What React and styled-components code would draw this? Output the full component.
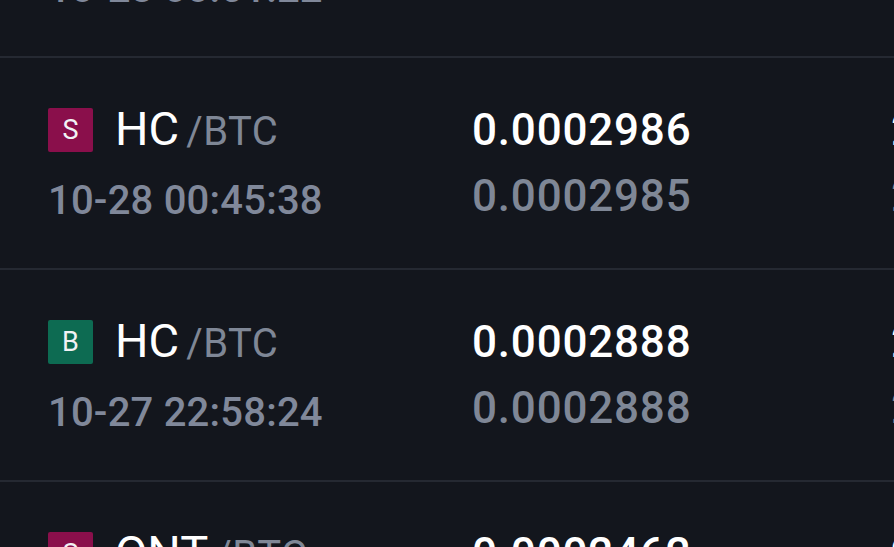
import React from "react";
import styled, { createGlobalStyle } from "styled-components";

const Global = createGlobalStyle`
  html, body { margin: 0; padding: 0; background: #13161d; }
  body { font-family: Roboto, "Noto Sans", sans-serif; }
`;

const Viewport = styled.div`
  width: 894px;
  height: 547px;
  overflow: hidden;
  background: #13161d;
`;

const List = styled.div`
  margin-top: -154px;
  display: flex;
  flex-direction: column;
`;

const Row = styled.div`
  display: flex;
  height: 126px;
  padding: 42px 0;
  box-sizing: content-box;
  border-bottom: 2px solid #252932;
`;

const Col = styled.div`
  display: flex;
  flex-direction: column;
  gap: 6px;
  flex: 0 0 ${(p) => p.$w}px;
  padding-left: ${(p) => p.$pl || 0}px;
  box-sizing: border-box;
  white-space: nowrap;
`;

const Line = styled.div`
  height: 60px;
  line-height: 60px;
  display: flex;
  align-items: center;
  box-sizing: border-box;
  padding-top: ${(p) => p.$shift || 0}px;
`;

const Badge = styled.span`
  width: 45px;
  height: 44px;
  border-radius: 2px;
  background: ${(p) => (p.$side === "B" ? "#0d6b52" : "#8a0f4b")};
  color: #f2f2f5;
  font-size: 27px;
  display: flex;
  align-items: center;
  justify-content: center;
  line-height: 1;
  margin-right: 22px;
  flex: none;
`;

const Pair = styled.span`
  display: flex;
  align-items: baseline;
  line-height: 60px;
`;

const Base = styled.span`
  font-size: 47px;
  color: #ffffff;
  margin-right: 7px;
`;

const Quote = styled.span`
  font-size: 40px;
  letter-spacing: 0.5px;
  color: #7f8796;
`;

const Time = styled.span`
  font-size: 40px;
  font-weight: 500;
  letter-spacing: 0.2px;
  color: #80889a;
  line-height: 50px;
`;

const Price = styled.span`
  font-size: 44px;
  font-weight: 500;
  letter-spacing: 0.8px;
  color: ${(p) => (p.$muted ? "#7f8796" : "#ffffff")};
`;

const rows = [
  { side: "B", base: "HC", quote: "/BTC", time: "10-28 00:51:22", p1: "0.0002990", p2: "", a1: "2,000.00", a2: "" },
  { side: "S", base: "HC", quote: "/BTC", time: "10-28 00:45:38", p1: "0.0002986", p2: "0.0002985", a1: "2,000.00", a2: "2,000.00" },
  { side: "B", base: "HC", quote: "/BTC", time: "10-27 22:58:24", p1: "0.0002888", p2: "0.0002888", a1: "2,000.00", a2: "2,000.00" },
  { side: "S", base: "ONT", quote: "/BTC", time: "10-27 21:12:05", p1: "0.0002462", p2: "0.0002460", a1: "2,000.00", a2: "2,000.00" },
];

export default function App() {
  return (
    <>
      <Global />
      <Viewport>
        <List>
          {rows.map((r, i) => (
            <Row key={i}>
              <Col $w={472} $pl={48}>
                <Line>
                  <Badge $side={r.side}>{r.side}</Badge>
                  <Pair>
                    <Base>{r.base}</Base>
                    <Quote>{r.quote}</Quote>
                  </Pair>
                </Line>
                <Line $shift={10}>
                  <Time>{r.time}</Time>
                </Line>
              </Col>
              <Col $w={419}>
                <Line>
                  <Price>{r.p1}</Price>
                </Line>
                <Line>
                  <Price $muted>{r.p2}</Price>
                </Line>
              </Col>
              <Col $w={300}>
                <Line>
                  <Price>{r.a1}</Price>
                </Line>
                <Line>
                  <Price $muted>{r.a2}</Price>
                </Line>
              </Col>
            </Row>
          ))}
        </List>
      </Viewport>
    </>
  );
}
